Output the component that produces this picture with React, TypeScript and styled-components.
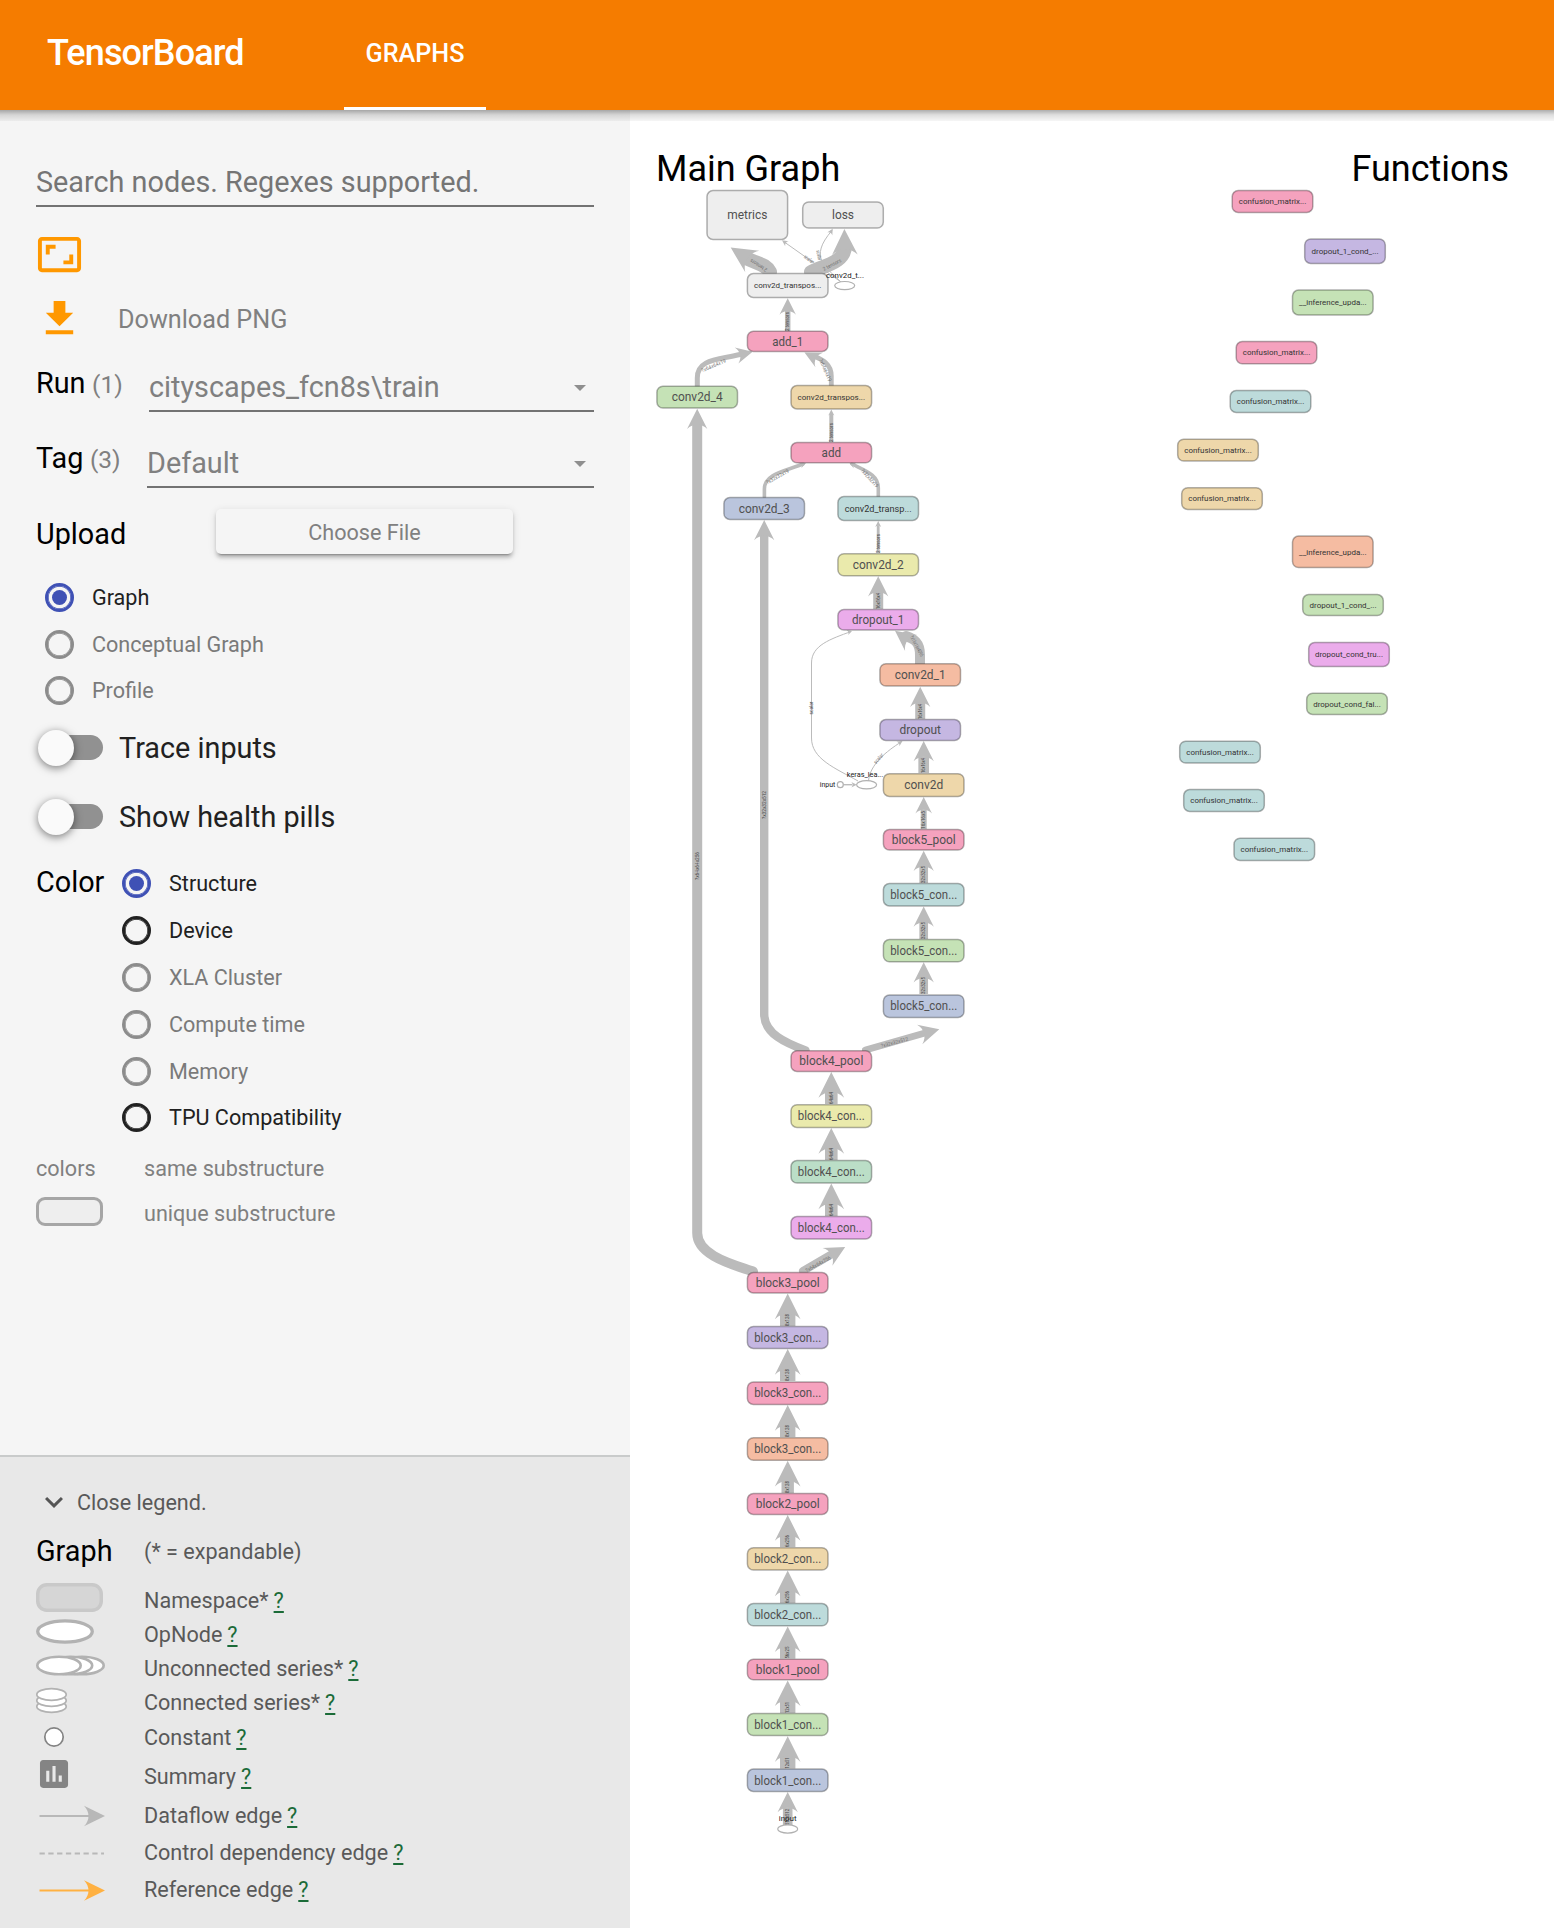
import React from "react";
import styled, { createGlobalStyle } from "styled-components";

const GlobalStyle = createGlobalStyle`
  *, *::before, *::after { box-sizing: border-box; }
  body {
    margin: 0;
    background: #fff;
    font-family: Roboto, "Liberation Sans", sans-serif;
    -webkit-font-smoothing: antialiased;
  }
`;

const Page = styled.div`
  display: flex;
  flex-direction: column;
  width: 1554px;
  height: 1928px;
  overflow: hidden;
`;

const Header = styled.header`
  position: relative;
  z-index: 2;
  display: flex;
  align-items: stretch;
  flex: none;
  height: 110px;
  padding-left: 47px;
  background: #f57c00;
  color: #fff;

  &::after {
    content: "";
    position: absolute;
    top: 100%;
    left: 0;
    right: 0;
    height: 11px;
    background: linear-gradient(rgba(0, 0, 0, 0.32), rgba(0, 0, 0, 0.13) 45%, rgba(0, 0, 0, 0.035));
  }
`;

const Brand = styled.div`
  width: 297px;
  font-size: 36px;
  font-weight: 500;
  letter-spacing: -0.9px;
  line-height: 107px;
`;

const Tab = styled.div`
  width: 142px;
  border-bottom: 3px solid #fff;
  font-size: 25.2px;
  font-weight: 500;
  line-height: 107px;
  text-align: center;
`;

const Body = styled.div`
  display: grid;
  grid-template-columns: 630px 1fr;
  flex: 1;
  min-height: 0;
`;

const Sidebar = styled.aside`
  display: flex;
  flex-direction: column;
  justify-content: space-between;
  background: #f5f5f5;
`;

const Controls = styled.div`
  display: flex;
  flex-direction: column;
  padding: 49px 36px 0;
`;

const Search = styled.div`
  height: 48px;
  border-bottom: 2px solid #737373;
  color: #757575;
  font-size: 28.8px;
  line-height: 46px;
`;

const IconRow = styled.div<{ $gap: number }>`
  display: flex;
  align-items: center;
  height: 47px;
  margin-top: ${(p) => p.$gap}px;
  color: #808080;
  font-size: 25.2px;
`;

const ActionLabel = styled.span`
  padding-top: 2px;
`;

const ActionIcon = styled.svg`
  width: 47px;
  height: 47px;
  margin-right: 35px;
  fill: #ff9800;
`;

const Field = styled.div<{ $gap: number }>`
  display: flex;
  height: 50px;
  margin-top: ${(p) => p.$gap}px;
`;

const FieldLabel = styled.div<{ $width: number; $line: number }>`
  flex: none;
  width: ${(p) => p.$width}px;
  font-size: 28.8px;
  line-height: ${(p) => p.$line}px;
  white-space: nowrap;
`;

const Count = styled.span`
  margin-left: 6.5px;
  color: #808080;
  font-size: 24.5px;
`;

const Select = styled.div<{ $drop: number }>`
  display: flex;
  align-items: center;
  justify-content: space-between;
  flex: 1;
  padding: ${(p) => p.$drop}px 8px 0 0;
  border-bottom: 2px solid #737373;
  color: #808080;
  font-size: 28.8px;
`;

const Caret = styled.span`
  width: 0;
  height: 0;
  margin-top: 2px;
  border: 6px solid transparent;
  border-top-color: #8f8f8f;
  border-bottom-width: 0;
`;

const UploadRow = styled.div`
  display: flex;
  align-items: center;
  height: 45px;
  margin-top: 21px;
`;

const UploadLabel = styled.div`
  width: 180px;
  padding-top: 4px;
  font-size: 28.8px;
`;

const UploadButton = styled.div`
  width: 297px;
  height: 45px;
  border-radius: 5px;
  box-shadow: 0 3.5px 3.5px rgba(0, 0, 0, 0.16), 0 2px 8px rgba(0, 0, 0, 0.12), 0 4px 2px -3px rgba(0, 0, 0, 0.3);
  color: #808080;
  font-size: 21.6px;
  line-height: 47px;
  text-align: center;
`;

const RadioGroup = styled.div<{ $gap: number; $indent: number }>`
  display: flex;
  flex-direction: column;
  margin-top: ${(p) => p.$gap}px;
  padding-left: ${(p) => p.$indent}px;
`;

type RadioTone = "checked" | "on" | "off";
const ringColor = { checked: "#3f51b5", on: "#212121", off: "#8c8c8c" };

const RadioRow = styled.div<{ $tone: RadioTone }>`
  display: flex;
  align-items: center;
  gap: 18px;
  height: 46.8px;
  color: ${(p) => (p.$tone === "off" ? "#7a7a7a" : "#212121")};
  font-size: 21.6px;
`;

const Ring = styled.span<{ $tone: RadioTone }>`
  display: grid;
  place-items: center;
  width: 29px;
  height: 29px;
  border: 3px solid ${(p) => ringColor[p.$tone]};
  border-radius: 50%;
  box-shadow: inset 0 0 0 0.7px ${(p) => ringColor[p.$tone]};

  &::after {
    content: "";
    width: 15px;
    height: 15px;
    border-radius: 50%;
    background: ${(p) => (p.$tone === "checked" ? "#3f51b5" : "transparent")};
  }
`;

const ToggleRow = styled.div<{ $gap: number }>`
  display: flex;
  align-items: center;
  gap: 16px;
  height: 50px;
  margin-top: ${(p) => p.$gap}px;
  padding-left: 2px;
  color: #212121;
  font-size: 28.8px;
`;

const Track = styled.span`
  display: flex;
  align-items: center;
  width: 63px;
  height: 25px;
  margin-left: 2px;
  border-radius: 12.5px;
  background: #919191;
`;

const Knob = styled.span`
  width: 36px;
  height: 36px;
  margin-left: -2px;
  border-radius: 50%;
  background: #fafafa;
  box-shadow: 0 2px 8px rgba(0, 0, 0, 0.5);
`;

const ToggleLabel = styled.span`
  padding-top: 1px;
`;

const ColorRow = styled.div`
  display: flex;
  margin-top: 18px;
`;

const ColorLabel = styled.div`
  width: 86px;
  font-size: 28.8px;
  line-height: 45px;
`;

const KeyRow = styled.div<{ $height: number }>`
  display: flex;
  align-items: center;
  height: ${(p) => p.$height}px;
  color: #808080;
  font-size: 21.6px;
`;

const KeyCell = styled.div`
  width: 108px;
`;

const UniqueSwatch = styled.div`
  width: 67px;
  height: 29px;
  border: 3px solid #a6a6a6;
  border-radius: 9px;
  background: #eee;
`;

const KeyText = styled.div<{ $drop?: number }>`
  padding-top: ${(p) => p.$drop ?? 0}px;
`;

const Legend = styled.section`
  height: 473px;
  padding: 22px 36px 0;
  border-top: 2px solid #c9cbcb;
  background: #e8e8e8;
  color: #595959;
  font-size: 21.6px;
`;

const LegendToggle = styled.div`
  display: flex;
  align-items: center;
  gap: 5px;
  height: 46px;
`;

const LegendHead = styled.div`
  display: flex;
  align-items: center;
  height: 52px;
  margin-bottom: 6px;
`;

const LegendTitle = styled.div`
  width: 108px;
  color: #000;
  font-size: 28.8px;
`;

const LegendRow = styled.div<{ $height: number }>`
  display: flex;
  align-items: center;
  height: ${(p) => p.$height}px;
`;

const LegendIcon = styled.svg`
  flex: none;
  display: block;
  width: 108px;
  height: 100%;
  overflow: visible;
`;

const Help = styled.span`
  margin-left: 5px;
  color: #1b6b38;
  text-decoration: underline;
  text-decoration-thickness: 2px;
  text-underline-offset: 3px;
`;

const Main = styled.main`
  position: relative;
  background: #fff;
`;

const Titles = styled.div`
  display: flex;
  justify-content: space-between;
  padding: 37px 45px 0 26px;
  color: #000;
  font-size: 36px;
  line-height: 44px;
`;

const Canvas = styled.svg`
  position: absolute;
  inset: 0;
  width: 924px;
  height: 1818px;
`;

/* ---------- graph data ---------- */

const C = {
  gray: "#eeeeee",
  pink: "#f5a2be",
  green: "#c5e2b6",
  tan: "#eed7aa",
  blue: "#bac5dd",
  teal: "#bddbdb",
  yellow: "#eaeaac",
  violet: "#ebaceb",
  orange: "#f5bca2",
  purple: "#c5b7e2",
  mint: "#bbdec7",
};

type NodeDef = [label: string, cx: number, top: number, bottom: number, fill: string, fontSize?: number, textWidth?: number];

const NODES: NodeDef[] = [
  ["metrics", 747.3, 190, 240, C.gray, 12.6, 40],
  ["loss", 843, 201.3, 228.7, C.gray, 12.6, 22],
  ["conv2d_transpos...", 787.7, 273, 298, C.gray, 8, 67.5],
  ["add_1", 787.7, 330.7, 352, C.pink, 12.6, 31],
  ["conv2d_4", 697.2, 385.7, 408.7, C.green, 12.6, 51],
  ["conv2d_transpos...", 831.3, 385, 409.5, C.tan, 8, 67.5],
  ["add", 831.3, 442, 463.3, C.pink, 12.6, 19.5],
  ["conv2d_3", 764.2, 497, 520, C.blue, 12.6, 51],
  ["conv2d_transp...", 878.2, 496, 521, C.teal, 9, 67],
  ["conv2d_2", 878.2, 553.2, 576.3, C.yellow, 12.6, 51],
  ["dropout_1", 878.2, 609, 630.7, C.violet, 12.6, 52.5],
  ["conv2d_1", 920.2, 663.2, 686.7, C.orange, 12.6, 51],
  ["dropout", 920.2, 719, 741, C.purple, 12.6, 41.5],
  ["conv2d", 923.7, 773.2, 797, C.tan, 12.6, 39],
  ["block5_pool", 923.7, 829, 850.7, C.pink, 12.6, 64],
  ["block5_con...", 923.7, 883, 906.5, C.teal, 12.6, 67],
  ["block5_con...", 923.7, 939, 962.3, C.green, 12.6, 67],
  ["block5_con...", 923.7, 994.4, 1018, C.blue, 12.6, 67],
  ["block4_pool", 831.3, 1050.2, 1072, C.pink, 12.6, 64],
  ["block4_con...", 831.3, 1104.2, 1128, C.yellow, 12.6, 67],
  ["block4_con...", 831.3, 1160, 1183.6, C.mint, 12.6, 67],
  ["block4_con...", 831.3, 1216, 1239.5, C.violet, 12.6, 67],
  ["block3_pool", 787.7, 1272, 1293.5, C.pink, 12.6, 64],
  ["block3_con...", 787.7, 1325.8, 1349, C.purple, 12.6, 67],
  ["block3_con...", 787.7, 1381.3, 1405, C.pink, 12.6, 67],
  ["block3_con...", 787.7, 1437.2, 1460.8, C.orange, 12.6, 67],
  ["block2_pool", 787.7, 1493, 1515, C.pink, 12.6, 64],
  ["block2_con...", 787.7, 1547.2, 1570.6, C.tan, 12.6, 67],
  ["block2_con...", 787.7, 1603, 1626.4, C.teal, 12.6, 67],
  ["block1_pool", 787.7, 1658.6, 1680.4, C.pink, 12.6, 64],
  ["block1_con...", 787.7, 1713, 1736.2, C.green, 12.6, 67],
  ["block1_con...", 787.7, 1768.5, 1792, C.blue, 12.6, 67],
  ["confusion_matrix...", 1272.5, 190, 213, C.pink, 8, 67.5],
  ["dropout_1_cond_...", 1345, 238.3, 264, C.purple, 8, 67],
  ["__inference_upda...", 1332.8, 289.5, 315.5, C.green, 8, 67.5],
  ["confusion_matrix...", 1276.5, 341, 364.3, C.pink, 8, 67.5],
  ["confusion_matrix...", 1270.5, 390, 413, C.teal, 8, 67.5],
  ["confusion_matrix...", 1218, 438.6, 461.6, C.tan, 8, 67.5],
  ["confusion_matrix...", 1222, 487.2, 510, C.tan, 8, 67.5],
  ["__inference_upda...", 1332.8, 535.5, 568.2, C.orange, 8, 67.5],
  ["dropout_1_cond_...", 1343, 594, 616.2, C.green, 8, 67],
  ["dropout_cond_tru...", 1349, 642, 667, C.violet, 8, 68],
  ["dropout_cond_fal...", 1347, 692.6, 715, C.green, 8, 67.5],
  ["confusion_matrix...", 1220, 740.6, 763.6, C.teal, 8, 67.5],
  ["confusion_matrix...", 1224, 789, 812, C.teal, 8, 67.5],
  ["confusion_matrix...", 1274.3, 837.6, 861, C.teal, 8, 67.5],
];

/* Straight upward edges: x, start y, tip y, stem width, arrow size, visible label, label length */
type UpEdge = [number, number, number, number, number, string, number];

const UP_EDGES: UpEdge[] = [
  [787.7, 331, 298.3, 5.5, 16.5, "2 tensors", 19],
  [831.3, 442, 409.5, 4, 6, "2 tensors", 19],
  [878.2, 553, 521, 2.8, 6, "2 tensors", 19],
  [878.2, 609, 576.3, 10, 20.3, "16x16x4", 16],
  [920.2, 719, 686.7, 10, 20.3, "16x16x4", 15],
  [923.7, 773, 741, 10.7, 20.3, "16x16x4", 15],
  [923.7, 829, 797, 6, 16.6, "16x16x5", 18],
  [923.7, 883, 850.7, 8.7, 20.3, "32x32x5", 17],
  [923.7, 939, 906.5, 8.7, 20.3, "32x32x5", 17],
  [923.7, 994, 962.3, 8.7, 20.3, "32x32x5", 17],
  [831.3, 1104, 1072, 12.6, 25.7, "64x64", 12],
  [831.3, 1160, 1128, 12.6, 25.7, "64x64", 12],
  [831.3, 1216, 1183.6, 12.6, 25.7, "64x64", 12],
  [787.7, 1326, 1293.5, 15.4, 25.7, "8x128", 12],
  [787.7, 1381, 1349, 15.4, 25.7, "8x128", 12],
  [787.7, 1437, 1405, 15.4, 25.7, "8x128", 12],
  [787.7, 1493, 1460.8, 12.4, 25.7, "8x128", 12],
  [787.7, 1547, 1515, 15.4, 25.7, "6x256", 12],
  [787.7, 1603, 1570.6, 15.4, 25.7, "6x256", 12],
  [787.7, 1658.6, 1626.4, 15.4, 25.7, "56x25", 12],
  [787.7, 1713, 1680.4, 15.4, 25.7, "12x51", 11],
  [787.7, 1768.5, 1736.2, 15.4, 25.7, "12x51", 11],
  [787.7, 1825, 1792, 9.6, 20.3, "512x512", 16],
];

/* Curved edges: path, width, tip x, tip y, heading in degrees, arrow size */
type CurveEdge = [string, number, number, number, number, number];

const CURVES: CurveEdge[] = [
  ["M753 1271.5 C735 1265 697.2 1256 697.2 1233 V424", 10, 697.2, 408.7, -90, 20.3],
  ["M805.5 1050.5 C786 1043 764.2 1034 764.2 1014 V536", 8.4, 764.2, 520, -90, 20.3],
  ["M865.5 1050 L925 1033", 7, 939.3, 1029.2, -15, 20.3],
  ["M803 1271 L833 1253.5", 8, 845.2, 1247, -29, 20.3],
  ["M697.3 386 V378 C697.3 359 718 360 740 354.5", 5, 752.6, 351.8, -13, 16.5],
  ["M831.3 386 V376 C831.3 364 823 360 813 355.5", 4.8, 804.5, 352.5, 207, 16.5],
  ["M764.4 497 V489 C764.4 474 785 471 803 464", 3.6, 806, 463, -21, 6],
  ["M878.3 497 V488 C878.3 475 866 471 852 464", 3.6, 849.5, 463, 205, 6],
  ["M920 664 V655 C920 642 914 639 906 636", 10, 895, 630.8, 217, 20.3],
  ["M770 272 C766 264 758 264 748 259", 14, 730.7, 247.6, 213, 25.7],
  ["M811 272 C826 265 845 262 845 246", 14, 844.4, 229, -91, 25.7],
];

const THIN_CURVES: CurveEdge[] = [
  ["M841 282 L785 242.5", 1, 782, 240.3, 215, 6],
  ["M841 282 C826 267 808 258 832 230.5", 1, 832.7, 228.7, -60, 6],
  ["M858 781 C835 768 811.5 759 811.5 738 V663 C811.5 645 831 639 851 631.5", 1, 852, 631, -20, 5],
  ["M868.5 781 C870 764 887 751 901 742", 1, 902.5, 741, -33, 5.5],
  ["M843.5 784.7 H852", 1.4, 856.8, 784.7, 0, 5.5],
];

/* Labels that run along an edge: text, x, y, rotation, length */
const EDGE_LABELS: [string, number, number, number, number][] = [
  ["?x64x64x256", 697.2, 866, -90, 28],
  ["?x32x32x512", 764.2, 805, -90, 28],
  ["?x32x32x512", 894.5, 1042.3, -15, 28],
  ["?x64x64x256", 818, 1264, -29, 28],
  ["?x64x64x19", 713.5, 365.5, -23, 26],
  ["?x64x64x19", 825.5, 370, 66, 24],
  ["?x32x32x19", 777.5, 476.5, -29, 25],
  ["?x32x32x19", 869.8, 478, 48, 23],
  ["?x16x16x4096", 917, 646, 62, 23],
  ["2 tensors", 758.5, 265.5, 213, 19],
  ["2 tensors", 832, 264.5, -28, 20],
  ["scalar", 809, 259, 35, 11],
  ["scalar", 819, 255, 80, 10],
  ["scalar", 811.5, 708, -90, 13],
  ["scalar", 878.5, 758.5, -50, 12],
];

const EDGE = "#bbbbbb";

function ArrowHead({ x, y, angle, size }: { x: number; y: number; angle: number; size: number }) {
  return (
    <path
      d="M0 0 L-10 -5 C-7 -2 -7 2 -10 5 Z"
      fill={EDGE}
      transform={`translate(${x} ${y}) rotate(${angle}) scale(${size / 10})`}
    />
  );
}

function EdgeLabel({ text, x, y, angle, length }: { text: string; x: number; y: number; angle: number; length: number }) {
  return (
    <text
      transform={`translate(${x} ${y}) rotate(${angle})`}
      y={1.9}
      fontSize={5.3}
      fill={angle === -90 ? "#444" : "#707070"}
      textAnchor="middle"
      textLength={length}
      lengthAdjust="spacingAndGlyphs"
    >
      {text}
    </text>
  );
}

function GraphNode({ def }: { def: NodeDef }) {
  const [label, cx, top, bottom, fill, size = 12.6, textWidth] = def;
  const isSmall = size < 12;
  return (
    <g>
      <rect
        x={cx - 40.3}
        y={top + 0.6}
        width={80.6}
        height={bottom - top - 1.2}
        rx={6}
        fill={fill}
        stroke="#000"
        strokeOpacity={0.3}
        strokeWidth={1.5}
      />
      <text
        x={cx}
        y={(top + bottom) / 2 + size * 0.34}
        fontSize={size}
        fill={isSmall ? "#333" : "#505050"}
        textAnchor="middle"
        textLength={textWidth}
        lengthAdjust="spacingAndGlyphs"
      >
        {label}
      </text>
    </g>
  );
}

function Graph() {
  return (
    <Canvas viewBox="630 110 924 1818">
      <g fill="none" stroke={EDGE}>
        {THIN_CURVES.map((e, i) => (
          <path key={i} d={e[0]} strokeWidth={e[1]} />
        ))}
        {CURVES.map((e, i) => (
          <path key={i} d={e[0]} strokeWidth={e[1]} strokeLinecap="round" strokeLinejoin="round" />
        ))}
      </g>
      {[...THIN_CURVES, ...CURVES].map((e, i) => (
        <ArrowHead key={i} x={e[2]} y={e[3]} angle={e[4]} size={e[5]} />
      ))}
      {UP_EDGES.map(([x, start, tip, width, size, label, length], i) => (
        <g key={i}>
          <path d={`M${x} ${start} V${tip + size * 0.75}`} stroke={EDGE} strokeWidth={width} />
          <ArrowHead x={x} y={tip} angle={-90} size={size} />
          <EdgeLabel text={label} x={x - 0.3} y={start - length / 2} angle={-90} length={length} />
        </g>
      ))}
      {EDGE_LABELS.map(([text, x, y, angle, length], i) => (
        <EdgeLabel key={i} text={text} x={x} y={y} angle={angle} length={length} />
      ))}
      <g fill="#fff" stroke="#b0b0b0" strokeWidth={1.2}>
        <ellipse cx={844.7} cy={285.6} rx={10} ry={4.1} />
        <ellipse cx={866.6} cy={784.8} rx={10} ry={4.1} />
        <ellipse cx={787.7} cy={1829} rx={10} ry={4.1} />
        <circle cx={840.3} cy={784.7} r={3} />
      </g>
      {NODES.map((def, i) => (
        <GraphNode key={i} def={def} />
      ))}
      <g fontSize={7.6} fill="#222" textAnchor="middle">
        <text x={845} y={277.8} textLength={38} lengthAdjust="spacingAndGlyphs">conv2d_t...</text>
        <text x={865} y={777} textLength={36.5} lengthAdjust="spacingAndGlyphs">keras_lea...</text>
        <text x={827.5} y={787.2} textLength={15.5} lengthAdjust="spacingAndGlyphs">input</text>
        <text x={787.7} y={1820.8} textLength={18} lengthAdjust="spacingAndGlyphs">input</text>
      </g>
    </Canvas>
  );
}

/* ---------- sidebar ---------- */

function Radio({ tone, children }: { tone: RadioTone; children: React.ReactNode }) {
  return (
    <RadioRow $tone={tone}>
      <Ring $tone={tone} />
      {children}
    </RadioRow>
  );
}

function Toggle({ gap, children }: { gap: number; children: React.ReactNode }) {
  return (
    <ToggleRow $gap={gap}>
      <Track>
        <Knob />
      </Track>
      <ToggleLabel>{children}</ToggleLabel>
    </ToggleRow>
  );
}

function LegendItem({ height, label, children }: { height: number; label: string; children: React.ReactNode }) {
  return (
    <LegendRow $height={height}>
      <LegendIcon>{children}</LegendIcon>
      <span>
        {label}
        <Help>?</Help>
      </span>
    </LegendRow>
  );
}

export default function App() {
  return (
    <Page>
      <GlobalStyle />
      <Header>
        <Brand>TensorBoard</Brand>
        <Tab>GRAPHS</Tab>
      </Header>
      <Body>
        <Sidebar>
          <Controls>
            <Search>Search nodes. Regexes supported.</Search>
            <IconRow $gap={24}>
              <ActionIcon viewBox="0 0 24 24">
                <path d="M19 12h-2v3h-3v2h5v-5zM7 9h3V7H5v5h2V9zm14-6H3c-1.1 0-2 .9-2 2v14c0 1.1.9 2 2 2h18c1.1 0 2-.9 2-2V5c0-1.1-.9-2-2-2zm0 16.01H3V4.99h18v14.02z" />
              </ActionIcon>
            </IconRow>
            <IconRow $gap={17}>
              <ActionIcon viewBox="0 0 24 24">
                <path d="M19 9h-4V3H9v6H5l7 7 7-7zM5 18v2h14v-2H5z" />
              </ActionIcon>
              <ActionLabel>Download PNG</ActionLabel>
            </IconRow>
            <Field $gap={20}>
              <FieldLabel $width={113} $line={43}>
                Run<Count>(1)</Count>
              </FieldLabel>
              <Select $drop={2}>
                cityscapes_fcn8s\train
                <Caret />
              </Select>
            </Field>
            <Field $gap={26}>
              <FieldLabel $width={111} $line={41}>
                Tag<Count>(3)</Count>
              </FieldLabel>
              <Select $drop={1}>
                Default
                <Caret />
              </Select>
            </Field>
            <UploadRow>
              <UploadLabel>Upload</UploadLabel>
              <UploadButton>Choose File</UploadButton>
            </UploadRow>
            <RadioGroup $gap={20} $indent={9}>
              <Radio tone="checked">Graph</Radio>
              <Radio tone="off">Conceptual Graph</Radio>
              <Radio tone="off">Profile</Radio>
            </RadioGroup>
            <Toggle gap={8.6}>Trace inputs</Toggle>
            <Toggle gap={19}>Show health pills</Toggle>
            <ColorRow>
              <ColorLabel>Color</ColorLabel>
              <RadioGroup $gap={0.5} $indent={0}>
                <Radio tone="checked">Structure</Radio>
                <Radio tone="on">Device</Radio>
                <Radio tone="off">XLA Cluster</Radio>
                <Radio tone="off">Compute time</Radio>
                <Radio tone="off">Memory</Radio>
                <Radio tone="on">TPU Compatibility</Radio>
              </RadioGroup>
            </ColorRow>
            <KeyRow $height={54}>
              <KeyCell>colors</KeyCell>
              <KeyText>same substructure</KeyText>
            </KeyRow>
            <KeyRow $height={32}>
              <KeyCell>
                <UniqueSwatch />
              </KeyCell>
              <KeyText $drop={5}>unique substructure</KeyText>
            </KeyRow>
          </Controls>
          <Legend>
            <LegendToggle>
              <svg width="36" height="36" viewBox="0 0 24 24" fill="#555">
                <path d="M7.41 8.59L12 13.17l4.59-4.58L18 10l-6 6-6-6 1.41-1.41z" />
              </svg>
              <span>Close legend.</span>
            </LegendToggle>
            <LegendHead>
              <LegendTitle>Graph</LegendTitle>
              <span>(* = expandable)</span>
            </LegendHead>
            <LegendItem height={34} label="Namespace*">
              <rect x="1.75" y="1.75" width="63.5" height="25.5" rx="9" fill="#d6d6d6" stroke="#c9c9c9" strokeWidth="3.5" />
            </LegendItem>
            <LegendItem height={34} label="OpNode">
              <ellipse cx="29" cy="14.5" rx="27.3" ry="10.7" fill="#fff" stroke="#b2b2b2" strokeWidth="3.3" />
            </LegendItem>
            <LegendItem height={34} label="Unconnected series*">
              <g fill="#fff" stroke="#b2b2b2" strokeWidth="2.6">
                <ellipse cx="46" cy="14.5" rx="21.7" ry="8.8" />
                <ellipse cx="34.5" cy="14.5" rx="21.7" ry="8.8" />
                <ellipse cx="23" cy="14.5" rx="21.7" ry="8.8" />
              </g>
            </LegendItem>
            <LegendItem height={34} label="Connected series*">
              <g fill="#fff" stroke="#b2b2b2" strokeWidth="1.7">
                <ellipse cx="15.5" cy="21.5" rx="14.7" ry="5.8" />
                <ellipse cx="15.5" cy="15.5" rx="14.7" ry="5.8" />
                <ellipse cx="15.5" cy="9.5" rx="14.7" ry="5.8" />
              </g>
            </LegendItem>
            <LegendItem height={36} label="Constant">
              <circle cx="18" cy="18" r="9.2" fill="#fff" stroke="#848484" strokeWidth="1.7" />
            </LegendItem>
            <LegendItem height={42} label="Summary">
              <path
                transform="translate(-0.7 0.2) scale(1.56)"
                fill="#848484"
                d="M19 3H5c-1.1 0-2 .9-2 2v14c0 1.1.9 2 2 2h14c1.1 0 2-.9 2-2V5c0-1.1-.9-2-2-2zM9 17H7v-7h2v7zm4 0h-2V7h2v10zm4 0h-2v-4h2v4z"
              />
            </LegendItem>
            <LegendItem height={36.5} label="Dataflow edge">
              <path d="M3.5 19 H54" stroke="#b8b8b8" strokeWidth="2" />
              <path d="M69 19 L48 8.7 C54 15 54 23 48 29.3 Z" fill="#b8b8b8" />
            </LegendItem>
            <LegendItem height={37} label="Control dependency edge">
              <path d="M3.5 19.5 H68" stroke="#b8b8b8" strokeWidth="2" strokeDasharray="5.3 3.5" />
            </LegendItem>
            <LegendItem height={37} label="Reference edge">
              <path d="M3.5 19.5 H54" stroke="#ffb142" strokeWidth="2" />
              <path d="M69 19.5 L48 9.2 C54 15.5 54 23.5 48 29.8 Z" fill="#ffb142" />
            </LegendItem>
          </Legend>
        </Sidebar>
        <Main>
          <Titles>
            <span>Main Graph</span>
            <span>Functions</span>
          </Titles>
          <Graph />
        </Main>
      </Body>
    </Page>
  );
}
